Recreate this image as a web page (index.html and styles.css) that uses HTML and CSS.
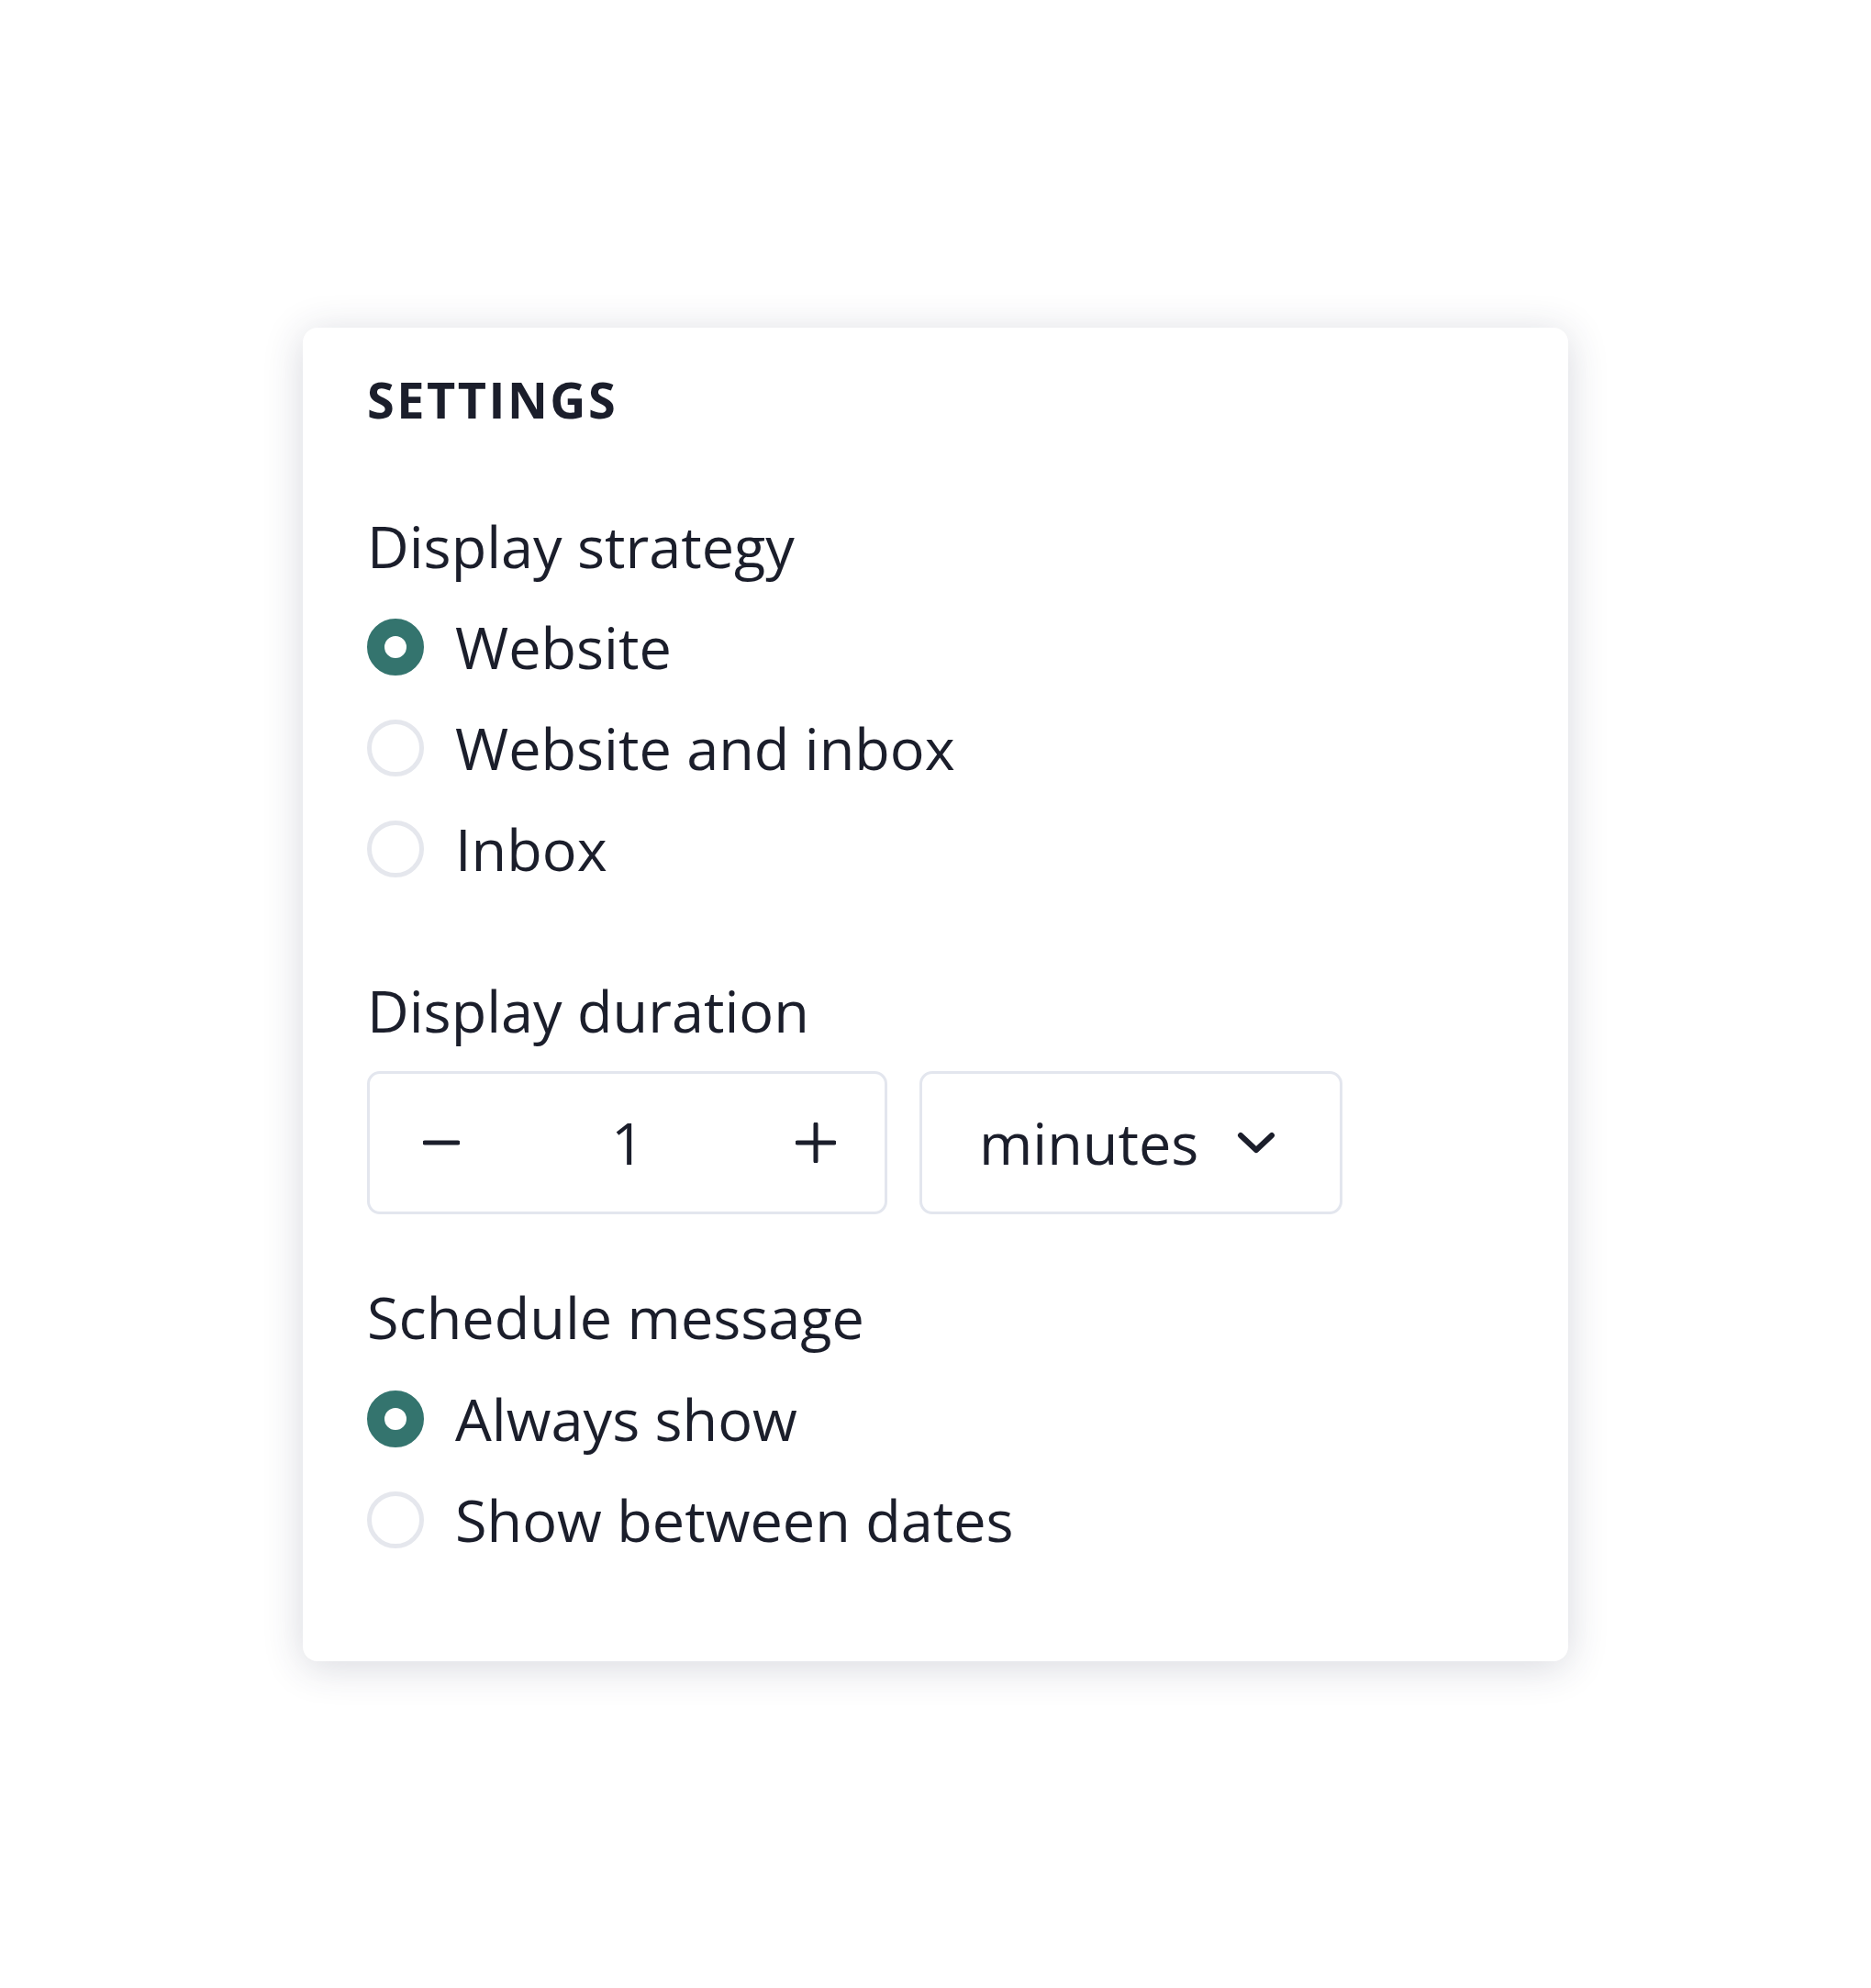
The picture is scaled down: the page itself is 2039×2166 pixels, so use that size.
FILE: index.html
```html
<!DOCTYPE html>
<html lang="en">
<head>
  <meta charset="UTF-8">
  <title>Settings</title>
  <link rel="stylesheet" href="styles.css">
</head>
<body>
  <div class="wrapper">
    <div class="card">

      <h2 class="card-title">SETTINGS</h2>

      <!-- Display strategy -->
      <div class="field">
        <div class="field-label">Display strategy</div>
        <div class="radio-row"><span class="radio checked"></span><span>Website</span></div>
        <div class="radio-row"><span class="radio"></span><span>Website and inbox</span></div>
        <div class="radio-row"><span class="radio"></span><span>Inbox</span></div>
      </div>

      <!-- Display duration -->
      <div class="field field-duration">
        <div class="field-label">Display duration</div>
        <div class="duration-row">
          <div class="stepper">
            <svg class="step-btn" width="40" height="40" viewBox="0 0 40 40"><line x1="2" y1="20" x2="38" y2="20" /></svg>
            <span class="step-value">1</span>
            <svg class="step-btn" width="44" height="44" viewBox="0 0 44 44"><line x1="2" y1="22" x2="42" y2="22" /><line x1="22" y1="2" x2="22" y2="42" /></svg>
          </div>
          <div class="select">
            <span>minutes</span>
            <svg class="chevron" width="42" height="24" viewBox="0 0 42 24"><polyline points="4,4 21,20 38,4" /></svg>
          </div>
        </div>
      </div>

      <!-- Schedule message -->
      <div class="field field-schedule">
        <div class="field-label">Schedule message</div>
        <div class="radio-row"><span class="radio checked"></span><span>Always show</span></div>
        <div class="radio-row"><span class="radio"></span><span>Show between dates</span></div>
      </div>

    </div>
  </div>
</body>
</html>
```

FILE: styles.css
```css
* {
  box-sizing: border-box;
}

html, body {
  margin: 0;
  padding: 0;
  background: #fff;
  font-family: 'Open Sans', 'Noto Sans', sans-serif;
  color: #1b1e2b;
}

.wrapper {
  display: flex;
  justify-content: center;
  align-items: center;
  min-height: 100vh;
}

.card {
  width: 1379px;
  background: #fff;
  border-radius: 16px;
  box-shadow: 0 6px 44px rgba(40, 50, 80, 0.19);
  padding: 46px 70px 99px;
}

.card-title {
  margin: 0;
  font-size: 54px;
  line-height: 64px;
  font-weight: 700;
  letter-spacing: 2.5px;
}

.field {
  margin-top: 88px;
}

.field-label {
  font-size: 63px;
  line-height: 80px;
  margin-bottom: 15px;
}

.radio-row {
  display: flex;
  align-items: center;
  gap: 34px;
  height: 110px;
  font-size: 63px;
}

.radio {
  width: 62px;
  height: 62px;
  border-radius: 50%;
  border: 5px solid #e5e7ed;
  flex-shrink: 0;
}

.radio.checked {
  border: 19px solid #34746e;
}

.field-duration {
  margin-top: 81px;
}

.field-duration .field-label {
  margin-bottom: 26px;
}

.duration-row {
  display: flex;
  gap: 35px;
}

.stepper,
.select {
  height: 156px;
  border: 3px solid #e3e6ee;
  border-radius: 14px;
  display: flex;
  align-items: center;
  font-size: 63px;
}

.stepper {
  width: 567px;
  justify-content: space-between;
  padding: 0 53px 0 58px;
}

.step-btn line {
  stroke: #1b1e2b;
  stroke-width: 5;
  stroke-linecap: round;
}

.select {
  width: 461px;
  padding: 0 70px 0 62px;
  justify-content: space-between;
}

.chevron polyline {
  fill: none;
  stroke: #1b1e2b;
  stroke-width: 6;
  stroke-linecap: round;
  stroke-linejoin: round;
}

.field-schedule {
  margin-top: 72px;
}

.field-schedule .field-label {
  margin-bottom: 16px;
}
```
